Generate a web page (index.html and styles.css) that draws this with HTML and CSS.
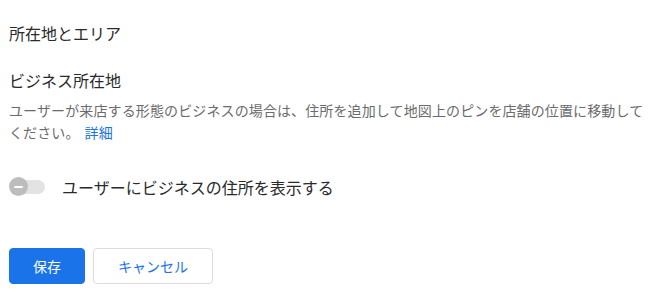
FILE: index.html
```html
<!DOCTYPE html>
<html lang="ja">
<head>
<meta charset="utf-8">
<link rel="stylesheet" href="styles.css">
</head>
<body>
<div class="page">
  <h1 class="title">所在地とエリア</h1>
  <h2 class="subtitle">ビジネス所在地</h2>
  <p class="desc"><span class="desc-text">ユーザーが来店する形態のビジネスの場合は、住所を追加して地図上のピンを店舗の位置に移動して</span><span class="desc-text">ください。</span><a class="link" href="#">詳細</a></p>
  <div class="toggle-row">
    <span class="toggle"><span class="track"></span><span class="knob"><span class="minus"></span></span></span>
    <span class="toggle-label">ユーザーにビジネスの住所を表示する</span>
  </div>
  <div class="actions">
    <button class="btn btn-primary">保存</button>
    <button class="btn btn-secondary">キャンセル</button>
  </div>
</div>
</body>
</html>
```
FILE: styles.css
```css
html, body {
  margin: 0;
  background: #fff;
}
body {
  font-family: "Noto Sans CJK JP", "Noto Sans", sans-serif;
  color: #333;
}
.page {
  padding: 21px 14px 0 9px;
}
.title {
  margin: 0;
  font-size: 16px;
  line-height: 24px;
  font-weight: 400;
  color: #2a2a2a;
}
.subtitle {
  margin: 23px 0 0;
  font-size: 16px;
  line-height: 24px;
  font-weight: 400;
  color: #2a2a2a;
}
.desc {
  margin: 7px 0 0;
  font-size: 14px;
  line-height: 22px;
  letter-spacing: 0.12px;
  font-weight: 400;
  color: #6b6b6b;
}
.desc-text {
  color: #6b6b6b;
}
.link {
  display: inline-block;
  margin-left: 5px;
  color: #1a73e8;
  text-decoration: none;
}
.toggle-row {
  margin-top: 32px;
  display: flex;
  align-items: center;
  height: 24px;
  gap: 17px;
}
.toggle {
  position: relative;
  width: 36px;
  height: 20px;
  display: inline-block;
}
.track {
  position: absolute;
  left: 2px;
  right: 0;
  top: 3px;
  height: 14px;
  border-radius: 7px;
  background: #e3e3e3;
}
.knob {
  position: absolute;
  left: 0;
  top: 0;
  width: 19px;
  height: 19px;
  border-radius: 50%;
  background: #bdbdbd;
  display: flex;
  align-items: center;
  justify-content: center;
}
.minus {
  width: 9px;
  height: 2px;
  background: #fff;
  border-radius: 1px;
}
.toggle-label {
  font-size: 16px;
  line-height: 24px;
  font-weight: 400;
  color: #2a2a2a;
}
.actions {
  margin-top: 49px;
  display: flex;
  gap: 8px;
}
.btn {
  height: 36px;
  border-radius: 4px;
  font-family: "Noto Sans CJK JP", "Noto Sans", sans-serif;
  font-size: 14px;
  padding: 0;
  cursor: pointer;
}
.btn-primary {
  width: 76px;
  background: #1a73e8;
  border: 1px solid #1a73e8;
  color: #fff;
}
.btn-secondary {
  width: 120px;
  background: #fff;
  border: 1px solid #dadce0;
  color: #1a73e8;
}
```
